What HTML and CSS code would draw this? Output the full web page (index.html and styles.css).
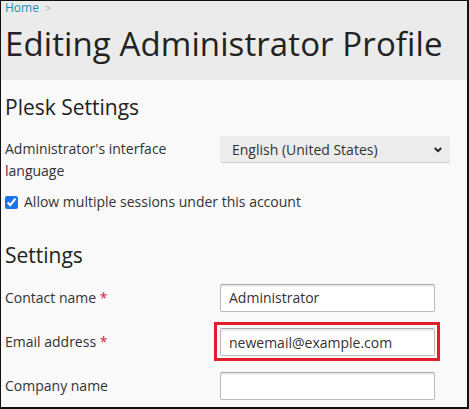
FILE: index.html
```html
<!DOCTYPE html>
<html lang="en">
<head>
<meta charset="utf-8">
<title>Editing Administrator Profile</title>
<link rel="stylesheet" href="styles.css">
</head>
<body>
<div class="frame">
  <header class="page-header">
    <nav class="breadcrumbs"><a href="#" class="crumb">Home</a><span class="crumb-sep">&gt;</span></nav>
    <h1 class="page-title">Editing Administrator Profile</h1>
  </header>

  <main class="content">
    <section class="form-section">
      <h2 class="section-title">Plesk Settings</h2>
      <div class="form-row form-row--tall">
        <label class="field-label" for="locale">Administrator's interface language</label>
        <div class="select-wrap">
          <select id="locale" class="select">
            <option>English (United States)</option>
          </select>
          <svg class="select-caret" width="8" height="6" viewBox="0 0 8 6"><path d="M0.8 1 4 4.2 7.2 1" fill="none" stroke="#222" stroke-width="2"/></svg>
        </div>
      </div>
      <label class="check-row">
        <input type="checkbox" class="checkbox" checked>
        <span>Allow multiple sessions under this account</span>
      </label>
    </section>

    <section class="form-section form-section--second">
      <h2 class="section-title">Settings</h2>
      <div class="form-row">
        <label class="field-label" for="cname">Contact name <span class="req">*</span></label>
        <input id="cname" class="text-input" type="text" value="Administrator">
      </div>
      <div class="form-row">
        <label class="field-label" for="email">Email address <span class="req">*</span></label>
        <span class="highlight"><input id="email" class="text-input" type="text" value="newemail@example.com"></span>
      </div>
      <div class="form-row">
        <label class="field-label" for="company">Company name</label>
        <input id="company" class="text-input" type="text" value="">
      </div>
    </section>
  </main>
</div>
</body>
</html>
```

FILE: styles.css
```css
* { box-sizing: border-box; }

html, body {
  margin: 0;
  padding: 0;
  width: 469px;
  height: 409px;
  overflow: hidden;
  background: #fff;
}

body {
  font-family: "Open Sans", "Noto Sans", sans-serif;
  color: #333;
}

.frame {
  width: 469px;
  height: 409px;
  border-top: 1px solid #111;
  border-left: 1px solid #111;
  border-right: 2px solid #111;
  border-bottom: 2px solid #111;
  background: #f9f9f9;
  overflow: hidden;
}

.page-header {
  background: #ebebeb;
  height: 79px;
  padding: 0 4px;
}

.breadcrumbs {
  font-size: 12px;
  line-height: 14px;
  display: flex;
  gap: 6px;
}

.crumb {
  color: #1d8ec0;
  text-decoration: none;
}

.crumb-sep {
  color: #b0b0b0;
  font-size: 11px;
}

.page-title {
  margin: 7px 0 0;
  font-size: 33px;
  line-height: 44px;
  font-weight: 400;
  color: #222;
  letter-spacing: 0.1px;
}

.content {
  padding: 0 4px;
}

.form-section {
  padding-top: 14px;
}

.form-section--second {
  padding-top: 29px;
}

.section-title {
  margin: 0;
  font-size: 21px;
  line-height: 27px;
  font-weight: 400;
  color: #222;
}

.form-row {
  display: flex;
  align-items: center;
  margin-top: 15px;
  height: 27px;
}

.form-section--second .form-row + .form-row {
  margin-top: 17px;
}

.form-row--tall {
  align-items: flex-start;
  height: auto;
  margin-top: 15px;
}

.form-row--tall .field-label {
  padding-top: 2px;
}

.field-label {
  width: 215px;
  flex: none;
  font-size: 14px;
  line-height: 22px;
  color: #333;
  padding-right: 14px;
}

.req {
  color: #d2243b;
}

.select-wrap {
  position: relative;
  width: 230px;
  height: 27px;
}

.select {
  appearance: none;
  -webkit-appearance: none;
  width: 100%;
  height: 27px;
  margin: 0;
  border: 0;
  border-bottom: 1px solid #cfcfcf;
  border-radius: 2px;
  background: #ececec;
  font-family: inherit;
  font-size: 14px;
  color: #333;
  padding: 0 0 0 12px;
}

.select-caret {
  position: absolute;
  right: 8px;
  top: 11px;
  pointer-events: none;
}

.check-row {
  display: flex;
  align-items: center;
  gap: 6px;
  margin-top: 9px;
  font-size: 14px;
  line-height: 22px;
  color: #333;
}

.checkbox {
  margin: 0;
  width: 13px;
  height: 13px;
  accent-color: #1a73e8;
}

.text-input {
  display: block;
  width: 215px;
  height: 28px;
  margin: 0;
  border: 1px solid #b9b9b9;
  border-top-color: #a8a8a8;
  border-radius: 2px;
  background: #fff;
  box-shadow: inset 0 2px 0 #ececec;
  font-family: inherit;
  font-size: 14px;
  color: #333;
  padding: 0 8px;
}

/* red frame drawn around the changed email field */
.highlight {
  display: block;
  flex: none;
  margin-left: -6px;
  padding: 3px 2px 2px 3px;
  border: 3px solid #e51d2a;
  height: 39px;
}
```
